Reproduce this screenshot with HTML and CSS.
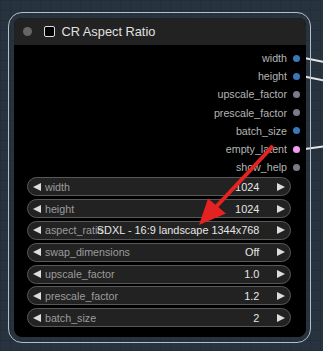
FILE: index.html
```html
<!DOCTYPE html>
<html lang="en">
<head>
    <meta charset="UTF-8">
    <meta name="viewport" content="width=device-width, initial-scale=1.0">
    <title>CR Aspect Ratio</title>
    <link rel="stylesheet" href="styles.css">
</head>
<body>
    <div class="canvas">
        <!-- links run under the node -->
        <svg class="links" width="323" height="351" viewBox="0 0 323 351">
            <line x1="298" y1="56.8" x2="323" y2="61.8"/>
            <line x1="298" y1="75.2" x2="323" y2="80.2"/>
            <line x1="298" y1="150" x2="323" y2="146.4"/>
        </svg>

        <div class="outline">
            <div class="node">
                <div class="node-title">
                    <span class="title-dot"></span>
                    <span class="title-box"></span>
                    <span class="title-text">CR Aspect Ratio</span>
                </div>

                <div class="outputs">
                    <div class="out"><span>width</span><i class="dot int"></i></div>
                    <div class="out"><span>height</span><i class="dot int"></i></div>
                    <div class="out"><span>upscale_factor</span><i class="dot float"></i></div>
                    <div class="out"><span>prescale_factor</span><i class="dot float"></i></div>
                    <div class="out"><span>batch_size</span><i class="dot int"></i></div>
                    <div class="out"><span>empty_latent</span><i class="dot latent"></i></div>
                    <div class="out"><span>show_help</span><i class="dot float"></i></div>
                </div>

                <div class="widgets">
                    <div class="widget"><i class="arr-l"></i><span class="w-label">width</span><span class="w-value">1024</span><i class="arr-r"></i></div>
                    <div class="widget"><i class="arr-l"></i><span class="w-label">height</span><span class="w-value">1024</span><i class="arr-r"></i></div>
                    <div class="widget"><i class="arr-l"></i><span class="w-label">aspect_ratio</span><span class="w-value">SDXL - 16:9 landscape 1344x768</span><i class="arr-r"></i></div>
                    <div class="widget"><i class="arr-l"></i><span class="w-label">swap_dimensions</span><span class="w-value">Off</span><i class="arr-r"></i></div>
                    <div class="widget"><i class="arr-l"></i><span class="w-label">upscale_factor</span><span class="w-value">1.0</span><i class="arr-r"></i></div>
                    <div class="widget"><i class="arr-l"></i><span class="w-label">prescale_factor</span><span class="w-value">1.2</span><i class="arr-r"></i></div>
                    <div class="widget"><i class="arr-l"></i><span class="w-label">batch_size</span><span class="w-value">2</span><i class="arr-r"></i></div>
                </div>
            </div>
        </div>

        <!-- red pointer drawn on top -->
        <svg class="pointer" width="323" height="351" viewBox="0 0 323 351">
            <line x1="273" y1="146" x2="214" y2="209"/>
            <polygon points="199,225 208,198.5 226,213.5"/>
        </svg>
    </div>
</body>
</html>
```

FILE: styles.css
```css
body {
    margin: 0;
    background-color: #273440;
    background-image:
        linear-gradient(#222e39 1px, transparent 1px),
        linear-gradient(90deg, #222e39 1px, transparent 1px);
    background-size: 10px 10px;
    font-family: "Liberation Sans", Arial, sans-serif;
}
.canvas {
    position: relative;
    width: 323px;
    height: 351px;
    overflow: hidden;
    padding-top: 12px;
    box-sizing: border-box;
}
.links, .pointer {
    position: absolute;
    left: 0;
    top: 0;
}
.links line {
    stroke: #e4e4e4;
    stroke-width: 2;
}
.pointer {
    z-index: 2;
}
.pointer line {
    stroke: #e42222;
    stroke-width: 4;
}
.pointer polygon {
    fill: #e42222;
}
.outline {
    position: relative;
    z-index: 1;
    margin-left: 8px;
    width: 303px;
    height: 331px;
    box-sizing: border-box;
    border: 1px solid #b4bec4;
    border-radius: 14px;
    padding: 5px 4px 5px 5px;
}
.node {
    background: #000;
    border-radius: 8px;
    overflow: hidden;
    height: 100%;
}
.node-title {
    height: 27px;
    background: #222;
    display: flex;
    align-items: center;
}
.title-dot {
    width: 9px;
    height: 9px;
    border-radius: 50%;
    background: #666;
    margin-left: 9px;
}
.title-box {
    width: 9px;
    height: 9px;
    border: 1.5px solid #ddd;
    border-radius: 2px;
    background: #000;
    margin-left: 11.5px;
}
.title-text {
    color: #e0e0e0;
    font-size: 12.8px;
    margin-left: 7px;
}
.outputs {
    padding-top: 4px;
}
.out {
    height: 18.2px;
    display: flex;
    justify-content: flex-end;
    align-items: center;
    padding-right: 6.5px;
    font-size: 10.7px;
    color: #b4b4b4;
}
.dot {
    width: 7px;
    height: 7px;
    border-radius: 50%;
    margin-left: 5.5px;
}
.dot.int {
    background: #3a78b8;
}
.dot.float {
    background: #7a7a8a;
}
.dot.latent {
    background: #f29cf0;
}
.widgets {
    padding: 1px 15px 0 13px;
}
.widget {
    height: 19px;
    box-sizing: border-box;
    margin-bottom: 2.8px;
    border: 1px solid #585858;
    border-radius: 10px;
    background: #222;
    display: flex;
    align-items: center;
    padding: 0 5px 0 5.3px;
    font-size: 10.7px;
    white-space: nowrap;
}
.arr-l, .arr-r {
    flex: none;
    width: 0;
    height: 0;
    border-top: 4.5px solid transparent;
    border-bottom: 4.5px solid transparent;
}
.arr-l {
    border-right: 8.7px solid #ddd;
}
.arr-r {
    border-left: 8.3px solid #ddd;
    margin-left: 17.7px;
}
.w-label {
    flex: 1;
    min-width: 0;
    margin-left: 3.7px;
    color: #9c9c9c;
}
.w-value {
    flex: none;
    position: relative;
    color: #e6e6e6;
    font-size: 10.9px;
}
```
